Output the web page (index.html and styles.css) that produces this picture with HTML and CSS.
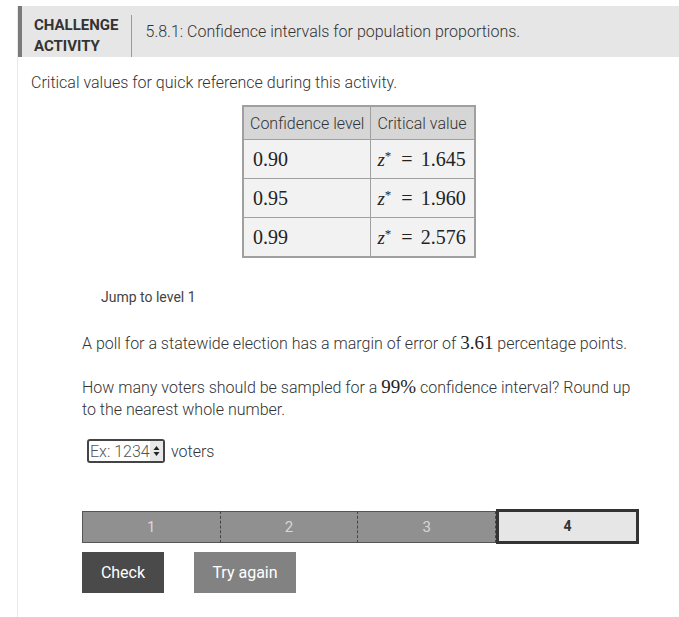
FILE: index.html
```html
<!DOCTYPE html>
<html lang="en">
<head>
    <meta charset="UTF-8">
    <meta name="viewport" content="width=device-width, initial-scale=1.0">
    <title>Challenge Activity 5.8.1</title>
    <link rel="stylesheet" href="styles.css">
</head>
<body>
    <div class="activity">
        <div class="activity-header">
            <div class="activity-label">CHALLENGE<br>ACTIVITY</div>
            <div class="activity-title">5.8.1: Confidence intervals for population proportions.</div>
        </div>

        <div class="activity-body">
            <p class="intro">Critical values for quick reference during this activity.</p>

            <table class="critical">
                <tr>
                    <th>Confidence level</th>
                    <th>Critical value</th>
                </tr>
                <tr>
                    <td class="num">0.90</td>
                    <td class="num"><i>z</i><sup>*</sup> <span class="eq">=</span> 1.645</td>
                </tr>
                <tr>
                    <td class="num">0.95</td>
                    <td class="num"><i>z</i><sup>*</sup> <span class="eq">=</span> 1.960</td>
                </tr>
                <tr>
                    <td class="num">0.99</td>
                    <td class="num"><i>z</i><sup>*</sup> <span class="eq">=</span> 2.576</td>
                </tr>
            </table>

            <div class="question">
                <div class="jump">Jump to level 1</div>

                <p class="prompt">A poll for a statewide election has a margin of error of <span class="math">3.61</span> percentage points.</p>
                <p class="prompt">How many voters should be sampled for a <span class="math">99%</span> confidence interval? Round up to the nearest whole number.</p>

                <div class="answer">
                    <label class="answer-box">
                        <input type="text" class="answer-input" placeholder="Ex: 1234">
                        <span class="spinner">
                            <svg width="7" height="12" viewBox="0 0 7 12">
                                <path d="M3.5 1 L6.5 5 L0.5 5 Z M3.5 11 L6.5 7 L0.5 7 Z" fill="#222"/>
                            </svg>
                        </span>
                    </label>
                    <span>voters</span>
                </div>

                <div class="levels">
                    <div class="level">1</div>
                    <div class="level">2</div>
                    <div class="level">3</div>
                    <div class="level current">4</div>
                </div>

                <div class="actions">
                    <button class="button check">Check</button>
                    <button class="button retry">Try again</button>
                </div>
            </div>
        </div>
    </div>
</body>
</html>
```

FILE: styles.css
```css
body {
    margin: 0;
    font-family: Roboto, "Liberation Sans", sans-serif;
    color: #333;
    background: #fff;
}
.activity {
    margin: 6px 0 0 17px;
    border-left: 1px solid #e8e8e8;
    min-height: 611px;
}
.activity-header {
    display: flex;
    align-items: center;
    height: 51px;
    background-color: #e6e6e6;
    border-left: 4px solid #7a7a7a;
}
.activity-label {
    font-size: 15px;
    font-weight: bold;
    line-height: 21px;
    color: #333;
    padding: 0 12px 0 12px;
    margin-top: 8px;
    border-right: 1px solid #9a9a9a;
}
.activity-title {
    font-size: 16px;
    font-weight: 300;
    color: #333;
    padding-left: 14px;
}
.activity-body {
    padding-left: 13px;
}
.intro {
    margin: 16px 0 12px 0;
    font-size: 16px;
    font-weight: 300;
    line-height: 20px;
}
.critical {
    margin-left: 211px;
    border-collapse: collapse;
    border: 2px solid #a0a0a0;
    font-size: 16px;
}
.critical th {
    background-color: #d6d6d6;
    font-weight: 300;
    text-align: left;
    padding: 0 6px;
    height: 32px;
    border: 1px solid #a0a0a0;
}
.critical th + th {
    padding: 0 7px 0 6px;
}
.critical td {
    background-color: #f2f2f2;
    border: 1px solid #a0a0a0;
    padding: 0 9px;
    height: 38px;
}
.critical td + td,
.critical th + th {
    text-align: right;
}
.critical td + td {
    padding: 0 8px 0 6px;
}
.num {
    font-family: "Liberation Serif", serif;
    font-size: 20px;
    color: #222;
}
.num i {
    font-size: 19px;
}
.num sup {
    font-size: 13px;
    vertical-align: 6px;
}
.eq {
    margin: 0 3px 0 5px;
}
.question {
    padding-left: 51px;
}
.jump {
    margin: 31px 0 0 19px;
    font-size: 14px;
    color: #444;
}
.prompt {
    font-size: 16px;
    font-weight: 300;
    line-height: 22px;
    margin: 28px 0 0 0;
    padding-right: 40px;
}
.prompt + .prompt {
    margin-top: 22px;
}
.math {
    font-family: "Liberation Serif", serif;
    font-size: 19px;
    line-height: 20px;
    font-weight: normal;
    color: #222;
}
.answer {
    display: flex;
    align-items: center;
    gap: 6px;
    margin: 18px 0 0 5px;
    font-size: 16px;
    font-weight: 300;
}
.answer-box {
    display: flex;
    align-items: center;
    height: 20px;
    border: 2px solid #444;
    border-radius: 3px;
}
.answer-input {
    width: 60px;
    height: 20px;
    padding: 0 0 0 1px;
    border: none;
    outline: none;
    background: transparent;
    font-family: Roboto, "Liberation Sans", sans-serif;
    font-size: 16px;
    font-weight: 300;
}
.answer-input::placeholder {
    color: #555;
}
.spinner {
    display: flex;
    align-items: center;
    justify-content: center;
    width: 13px;
    height: 20px;
    background-color: #e8e8e8;
}
.levels {
    display: flex;
    align-items: center;
    width: 557px;
    margin-top: 46px;
}
.level {
    box-sizing: border-box;
    flex: 1;
    height: 32px;
    line-height: 30px;
    text-align: center;
    background-color: #909090;
    color: #d8d8d8;
    font-size: 15px;
    border-top: 1px solid #555;
    border-bottom: 1px solid #555;
    border-right: 1px dashed #444;
}
.level:first-child {
    border-left: 1px solid #555;
}
.level.current {
    flex: 0 0 143px;
    height: 35px;
    line-height: 29px;
    background-color: #e6e6e6;
    border: 3px solid #333;
    color: #333;
    font-weight: bold;
    font-size: 14px;
}
.actions {
    display: flex;
    gap: 30px;
    margin-top: 8px;
}
.button {
    height: 41px;
    border: none;
    color: #fff;
    font-family: Roboto, "Liberation Sans", sans-serif;
    font-size: 16px;
    cursor: pointer;
}
.check {
    width: 82px;
    background-color: #4a4a4a;
}
.retry {
    width: 102px;
    background-color: #828282;
}
```
